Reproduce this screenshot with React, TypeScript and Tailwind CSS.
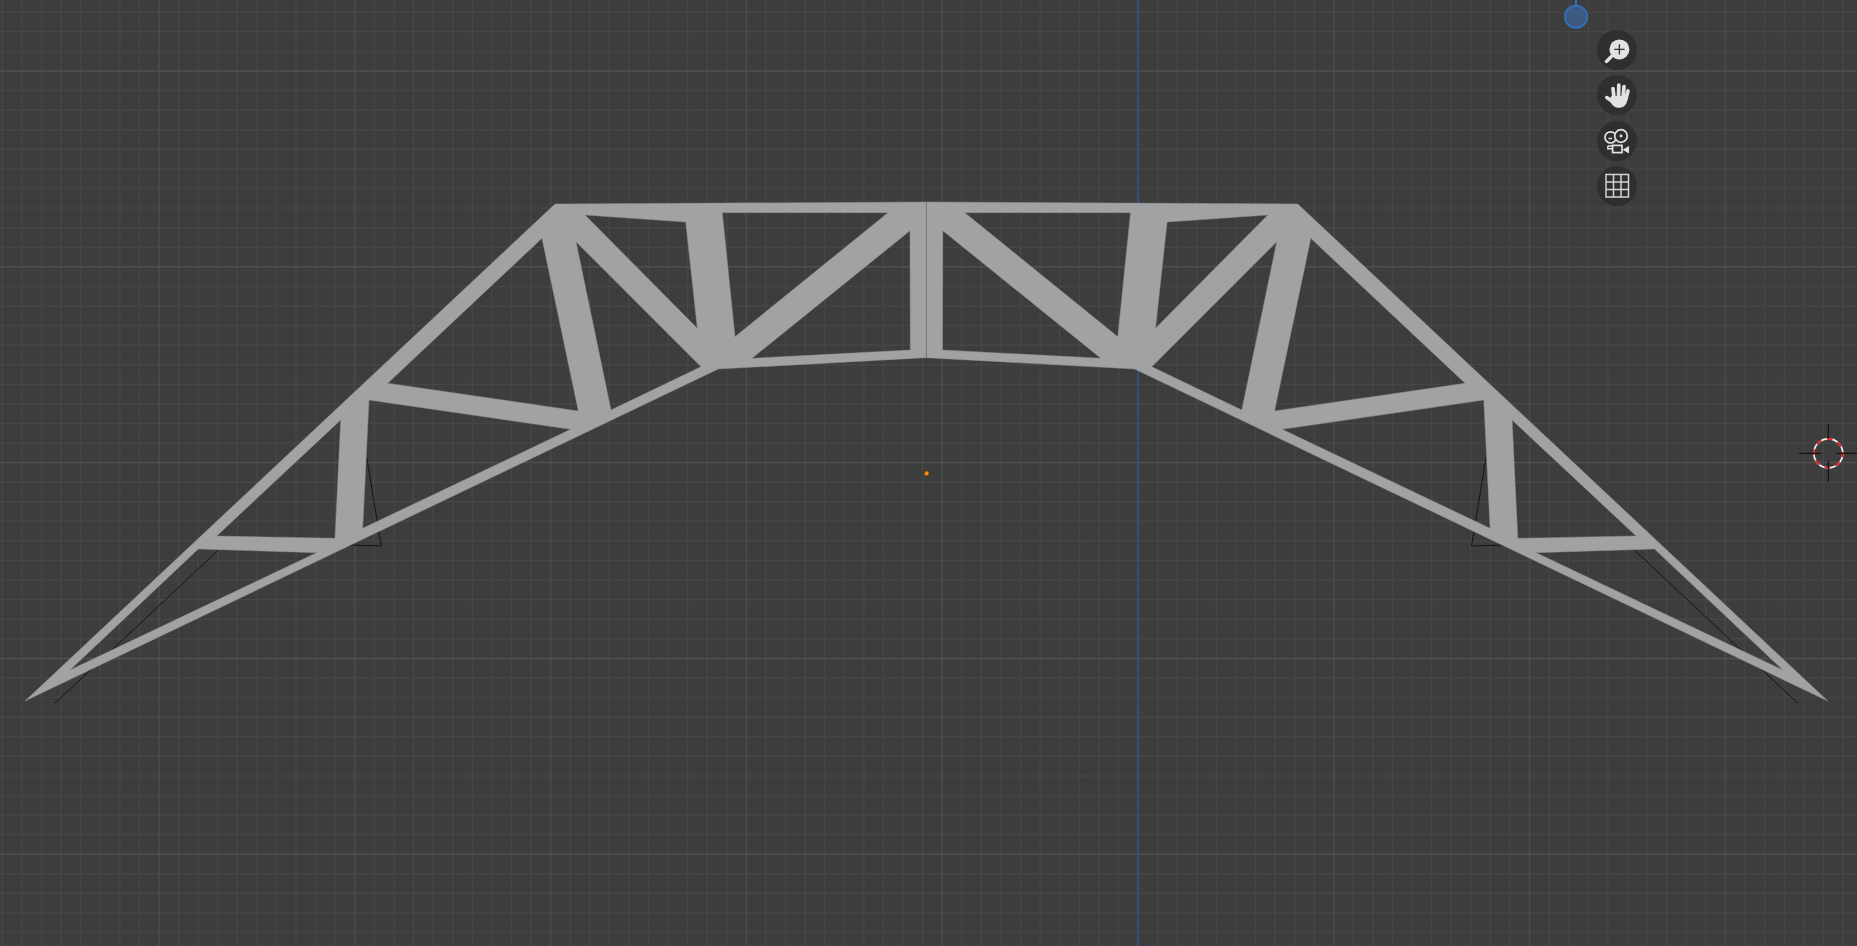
import React from 'react';

const CX = 926.4;
const range = (n: number) => Array.from({ length: n }, (_, i) => i);
const gridX = range(96).map((i) => ({ pos: 1138 - 58 * 19.58 + i * 19.58, major: (i - 58) % 10 === 0 }));
const gridY = range(50).map((i) => ({ pos: 71 - 3 * 19.58 + i * 19.58, major: (i - 3) % 10 === 0 }));

type Pt = [number, number];

// left half of the truss, the right half is its mirror
const outerLeft: Pt[] = [
  [926.4, 202],
  [555, 204],
  [25, 701],
  [718.3, 369],
  [926.4, 357.7],
];

const holesLeft: Pt[][] = [
  [[70, 670], [198.3, 549], [316.7, 552.7]],
  [[216.7, 536], [335, 538.3], [340.7, 420]],
  [[369, 400], [570.7, 429.3], [362.7, 528.3]],
  [[387.7, 383.3], [578.3, 411], [542, 238.3]],
  [[576, 241.7], [701, 366.7], [611, 410]],
  [[585, 215], [685.7, 222], [697.3, 328.3]],
  [[722.3, 212.7], [888, 212.7], [735, 336.7]],
  [[910, 230.7], [910.3, 350], [752, 358.3]],
];

const mirror = (pts: Pt[]): Pt[] => pts.map(([x, y]) => [2 * CX - x, y]);
const toPath = (pts: Pt[]) => 'M' + pts.map(([x, y]) => `${x} ${y}`).join('L') + 'Z';

const trussPath = [
  toPath([...outerLeft, ...mirror(outerLeft).reverse().slice(1, -1)]),
  ...holesLeft.map(toPath),
  ...holesLeft.map((h) => toPath(mirror(h))),
].join(' ');

const wires: Pt[][] = [
  [[55, 703.3], [217.7, 550.7]],
  [[366.7, 457.3], [381.3, 546], [349.3, 545]],
];

const ZoomIcon = () => (
  <svg width="40" height="40" viewBox="0 0 40 40">
    <circle cx="22.4" cy="19.4" r="10" fill="#e2e2e2" />
    <path d="M22.4 14.2v10.4M17.2 19.4h10.4" stroke="#2f2f2f" strokeWidth="1.3" />
    <path d="M14.4 26.6L9.4 31.4" stroke="#e2e2e2" strokeWidth="3.4" strokeLinecap="round" />
  </svg>
);

const HandIcon = () => (
  <svg width="40" height="40" viewBox="0 0 40 40" fill="none" stroke="#e2e2e2" strokeLinecap="round">
    <path d="M17 23L16 13.6M21.5 23L21.8 10M26 23L27 11.6M28.8 24.5L31 16" strokeWidth="3.7" />
    <path d="M9.8 22.6L15.5 26.5" strokeWidth="3.6" />
    <path
      d="M14.5 21H31L29.6 28C27.6 31.8 25 32.8 21.5 32.8C18 32.8 16 31 14 28L12 25Z"
      fill="#e2e2e2"
      stroke="none"
    />
  </svg>
);

const CameraIcon = () => (
  <svg width="40" height="40" viewBox="0 0 40 40" fill="none" stroke="#e2e2e2" strokeWidth="1.7">
    <circle cx="13.6" cy="16.4" r="5.6" />
    <circle cx="24" cy="15" r="6.3" fill="#2f2f2f" />
    <path d="M11.5 17.5H15" strokeWidth="1.5" />
    <circle cx="24" cy="15" r="1.4" fill="#e2e2e2" stroke="none" />
    <rect x="15.6" y="24.4" width="9.4" height="7.2" />
    <path d="M10.8 25H15.6M10.8 25V27.8H15.6" strokeWidth="1.4" />
    <path d="M31.4 26V31.4L26.8 28.7Z" fill="#e2e2e2" strokeWidth="1.2" />
  </svg>
);

const GridIcon = () => (
  <svg width="40" height="40" viewBox="0 0 40 40" fill="none" stroke="#d4d4d4" strokeWidth="1.5">
    <rect x="9" y="8.5" width="22.5" height="22.5" />
    <path d="M16.5 8.5V31M24 8.5V31M9 16H31.5M9 23.5H31.5" />
  </svg>
);

const buttons = [ZoomIcon, HandIcon, CameraIcon, GridIcon];

export default function App() {
  return (
    <div className="relative w-full h-screen overflow-hidden bg-[#3d3d3d]">
      <svg className="block w-full h-full" viewBox="0 0 1857 946">
        {gridX.filter((l) => !l.major).map((l) => (
          <line key={l.pos} x1={l.pos} x2={l.pos} y1="0" y2="946" stroke="#464646" strokeWidth="1.5" />
        ))}
        {gridY.filter((l) => !l.major).map((l) => (
          <line key={l.pos} y1={l.pos} y2={l.pos} x1="0" x2="1857" stroke="#464646" strokeWidth="1.5" />
        ))}
        {gridX.filter((l) => l.major).map((l) => (
          <line key={l.pos} x1={l.pos} x2={l.pos} y1="0" y2="946" stroke="#4c4c4c" strokeWidth="1.5" />
        ))}
        {gridY.filter((l) => l.major).map((l) => (
          <line key={l.pos} y1={l.pos} y2={l.pos} x1="0" x2="1857" stroke="#505050" strokeWidth="1.5" />
        ))}
        <line x1="1138" x2="1138" y1="0" y2="946" stroke="#2e5688" strokeWidth="1.6" />

        {wires.map((w, i) => (
          <g key={i} fill="none" stroke="#101010" strokeWidth="0.9">
            <polyline points={w.map((p) => p.join(',')).join(' ')} />
            <polyline points={mirror(w).map((p) => p.join(',')).join(' ')} />
          </g>
        ))}

        <path d={trussPath} fill="#a0a2a4" fillRule="evenodd" stroke="#8f9193" strokeWidth="0.5" />
        <line x1={CX} x2={CX} y1="202" y2="357.7" stroke="#74767a" strokeWidth="1" />

        <circle cx="926.6" cy="473.4" r="2.6" fill="#f28c12" stroke="#2a2a2a" strokeWidth="0.8" />

        {/* 3d cursor */}
        <g fill="none">
          <circle cx="1828.3" cy="453.3" r="14.5" stroke="#f2f2f2" strokeWidth="1.7" />
          <circle
            cx="1828.3"
            cy="453.3"
            r="14.5"
            stroke="#e8141c"
            strokeWidth="1.7"
            strokeDasharray="5.7 5.7"
            strokeDashoffset="2"
          />
          <path d="M1828.3 424V438M1828.3 461V482M1799 453.3H1821M1836 453.3H1857" stroke="#0c0c0c" strokeWidth="1" />
        </g>

        {/* navigation gizmo */}
        <line x1="1576" x2="1576" y1="0" y2="5" stroke="#2c74c4" strokeWidth="2" />
        <circle cx="1576" cy="16.7" r="11.2" fill="#3f5a80" stroke="#2c74c4" strokeWidth="1.6" />
      </svg>

      <div className="absolute left-[1597px] top-[30px] flex flex-col gap-[5.3px]">
        {buttons.map((Icon, i) => (
          <div key={i} className="w-10 h-10 rounded-full bg-[#2f2f2f]">
            <Icon />
          </div>
        ))}
      </div>
    </div>
  );
}
